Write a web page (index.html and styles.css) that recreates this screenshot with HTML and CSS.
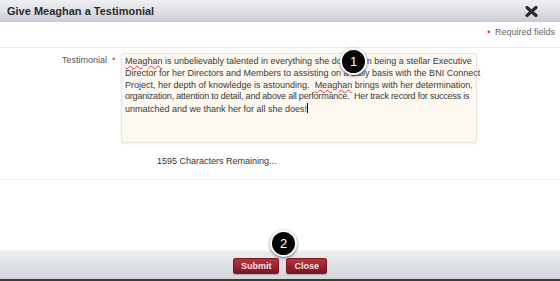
FILE: index.html
```html
<!DOCTYPE html>
<html>
<head>
<meta charset="utf-8">
<link rel="stylesheet" href="styles.css">
</head>
<body>
<div class="dialog">
  <div class="titlebar">
    <span class="title">Give Meaghan a Testimonial</span>
    <svg class="close-x" width="13" height="11" viewBox="0 0 13 11"><path d="M2 1.5 L11 9.5 M11 1.5 L2 9.5" stroke="#2b2b2b" stroke-width="3.2" stroke-linecap="round"/></svg>
  </div>
  <div class="content">
    <div class="req"><span class="star">&bull;</span> Required fields</div>
    <div class="field">
      <div class="label">Testimonial</div>
      <div class="star lbl-star">*</div>
      <div class="textarea">
        <div class="line"><span class="sp">Meaghan</span> is unbelievably talented in everything she does from being a stellar Executive</div>
        <div class="line">Director for her Directors and Members to assisting on a daily basis with the BNI Connect</div>
        <div class="line">Project, her depth of knowledge is astounding.&nbsp; <span class="sp">Meaghan</span> brings with her determination,</div>
        <div class="line tight">organization, attention to detail, and above all performance.&nbsp; Her track record for success is</div>
        <div class="line">unmatched and we thank her for all she does!<span class="caret"></span></div>
      </div>
    </div>
    <div class="count">1595 Characters Remaining...</div>
  </div>
  <div class="footer">
    <button class="btn">Submit</button>
    <button class="btn">Close</button>
  </div>
  <div class="badge b1">1</div>
  <div class="badge b2">2</div>
</div>
</body>
</html>
```
FILE: styles.css
```css
html, body {
  margin: 0;
  padding: 0;
  background: #fff;
}
.dialog {
  position: relative;
  width: 560px;
  height: 281px;
  display: flex;
  flex-direction: column;
  font-family: "Liberation Sans", Arial, sans-serif;
  overflow: hidden;
}
.titlebar {
  height: 22px;
  flex: none;
  display: flex;
  align-items: center;
  justify-content: space-between;
  padding: 0 22px 0 7px;
  background: linear-gradient(#eef0f3, #dfe1e6 50%, #c8cbd2);
}
.title {
  font-size: 11px;
  font-weight: bold;
  color: #2b2b2b;
}
.close-x {
  display: block;
}
.content {
  flex: 1;
}
.req {
  height: 21px;
  padding-top: 4px;
  line-height: 12px;
  font-size: 9px;
  color: #666;
  text-align: right;
  padding-right: 5px;
  border-bottom: 1px solid #ececec;
}
.req .star {
  margin-right: 2px;
}
.star {
  color: #e0262f;
}
.field {
  display: flex;
  align-items: flex-start;
  padding-top: 5px;
}
.label {
  width: 107px;
  text-align: right;
  font-size: 9px;
  color: #555;
  line-height: 12px;
  padding-top: 1px;
}
.lbl-star {
  width: 14px;
  box-sizing: border-box;
  padding-left: 5px;
  font-size: 9px;
  line-height: 12px;
  padding-top: 1px;
}
.textarea {
  width: 348px;
  height: 84px;
  padding: 2px 3px;
  background: #fdf8f0;
  border: 1px solid #ebe4d8;
  border-radius: 3px;
  box-shadow: 0 1px 2px rgba(0,0,0,0.08);
  font-size: 9px;
  line-height: 11.75px;
  color: #3a3a3a;
}
.line {
  white-space: nowrap;
}
.tight {
  letter-spacing: -0.2px;
}
.sp {
  text-decoration: underline wavy #e23a3a;
  text-decoration-thickness: 1px;
  text-underline-offset: 1px;
}
.caret {
  display: inline-block;
  width: 1px;
  height: 10px;
  background: #111;
  vertical-align: -1px;
}
.count {
  margin-top: 12px;
  padding-left: 157px;
  font-size: 9px;
  color: #333;
  line-height: 12px;
  height: 12px;
  padding-bottom: 12px;
  border-bottom: 1px solid #efefef;
}
.footer {
  flex: none;
  display: flex;
  justify-content: center;
  align-items: flex-start;
  gap: 7px;
  padding-top: 7px;
  box-sizing: border-box;
  height: 31px;
  background: linear-gradient(#ebecef, #e3e5e9 40%, #d2d5dc);
  border-top: 1px solid #f2f3f5;
  border-bottom: 2px solid #3a3a3a;
}
.btn {
  height: 16px;
  padding: 0 7px;
  border: 1px solid #7a1a22;
  border-radius: 2px;
  background: linear-gradient(#b8333f, #9a2230 50%, #7d1621);
  color: #f6e4e6;
  font-family: "Liberation Sans", Arial, sans-serif;
  font-size: 9px;
  font-weight: bold;
  line-height: 14px;
  box-shadow: 0 1px 1px rgba(0,0,0,0.2);
}
.badge {
  position: absolute;
  width: 23px;
  height: 23px;
  border-radius: 50%;
  background: #050505;
  border: 2px solid #fff;
  box-shadow: 0 1px 3px rgba(0,0,0,0.55);
  color: #fff;
  font-family: "Liberation Sans", Arial, sans-serif;
  font-size: 13px;
  line-height: 23px;
  text-align: center;
}
.b1 {
  left: 340px;
  top: 48px;
}
.b2 {
  left: 270px;
  top: 230px;
}
```
